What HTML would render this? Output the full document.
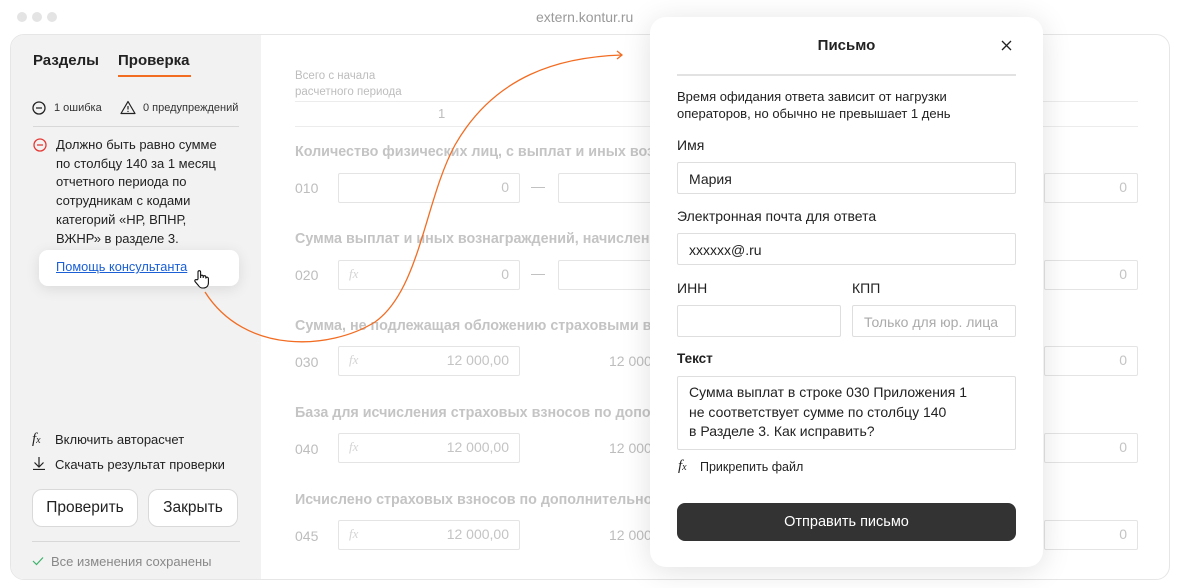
<!DOCTYPE html>
<html><head><meta charset="utf-8"><style>
*{box-sizing:border-box;margin:0;padding:0}
body{width:1180px;height:588px;background:#fff;font-family:"Liberation Sans","DejaVu Sans",sans-serif;position:relative;overflow:hidden;color:#222}
.a{position:absolute;white-space:nowrap}
.dot{position:absolute;width:10px;height:10px;border-radius:50%;background:#e4e4e4;top:12px}
.frame{position:absolute;left:10px;top:34px;width:1160px;height:546px;border:1px solid #e6e6e6;border-radius:14px;overflow:hidden;background:#fff}
.side{position:absolute;left:0;top:0;width:250px;height:100%;background:#f2f2f2}
.g{color:#bdbdbd}
.gt{color:#c4c4c4;font-weight:bold;font-size:14.3px}
.inp{position:absolute;border:1px solid #e4e4e4;border-radius:2px;height:30px;background:#fff}
.val{position:absolute;right:10px;top:5px;font-size:14px;color:#c4c4c4}
.fx{position:absolute;left:10px;top:5px;font-family:"Liberation Serif",serif;font-style:italic;font-size:13px;color:#d4d4d4}
.modal{position:absolute;left:650px;top:17px;width:393px;height:550px;background:#fff;border-radius:16px;box-shadow:0 4px 30px rgba(0,0,0,.12)}
.mi{position:absolute;border:1px solid #dedede;border-radius:2px;background:#fff;font-size:14px;padding:8px 11px;color:#222}
.lbl{position:absolute;font-size:14px;color:#222}
.btn{position:absolute;border:1px solid #d9d9d9;border-radius:10px;background:#fff;font-size:15.5px;text-align:center;line-height:36px;color:#222}
</style></head><body>
<div class="dot" style="left:17px"></div><div class="dot" style="left:32px"></div><div class="dot" style="left:47px"></div>
<div class="a" style="left:536px;top:9px;font-size:14px;color:#9a9a9a">extern.kontur.ru</div>

<div class="frame">
 <div class="side">
  <div class="a" style="left:22px;top:17px;font-size:15px;font-weight:bold;color:#222">Разделы</div>
  <div class="a" style="left:107px;top:17px;font-size:15px;font-weight:bold;color:#222">Проверка</div>
  <div class="a" style="left:107px;top:40px;width:73px;height:2px;background:#f26c22"></div>
  <svg class="a" style="left:21px;top:66px" width="14" height="14"><circle cx="7" cy="7" r="6" fill="none" stroke="#222" stroke-width="1.3"/><line x1="4" y1="7" x2="10" y2="7" stroke="#222" stroke-width="1.3"/></svg>
  <div class="a" style="left:43px;top:67px;font-size:11px;color:#333">1 ошибка</div>
  <svg class="a" style="left:109px;top:65px" width="16" height="15"><path d="M8 1.5 L15 13.5 H1 Z" fill="none" stroke="#222" stroke-width="1.2" stroke-linejoin="round"/><line x1="8" y1="6" x2="8" y2="9.5" stroke="#222" stroke-width="1.2"/><circle cx="8" cy="11.4" r=".7" fill="#222"/></svg>
  <div class="a" style="left:132px;top:67px;font-size:11px;color:#333">0 предупреждений</div>
  <div class="a" style="left:22px;top:91px;width:206px;height:1px;background:#d8d8d8"></div>
  <svg class="a" style="left:22px;top:103px" width="14" height="14"><circle cx="7" cy="7" r="6" fill="none" stroke="#e53935" stroke-width="1.3"/><line x1="4" y1="7" x2="10" y2="7" stroke="#e53935" stroke-width="1.3"/></svg>
  <div class="a" style="left:45px;top:101px;font-size:13px;line-height:18.7px;color:#222">Должно быть равно сумме<br>по столбцу 140 за 1 месяц<br>отчетного периода по<br>сотрудникам с кодами<br>категорий «НР, ВПНР,<br>ВЖНР» в разделе 3.</div>
  <div class="a" style="left:28px;top:215px;width:200px;height:36px;background:#fff;border-radius:9px;box-shadow:0 3px 14px rgba(0,0,0,.1)"></div>
  <div class="a" style="left:45px;top:224px;font-size:12.8px;color:#1a5fd6;text-decoration:underline">Помощь консультанта</div>
  <svg class="a" style="left:182px;top:234px" width="18" height="20"><path d="M5 10 V3 a1.3 1.3 0 0 1 2.6 0 V9 V7.5 a1.3 1.3 0 0 1 2.6 0 V9 V8 a1.3 1.3 0 0 1 2.6 0 V9.5 a1.3 1.3 0 0 1 2.6 0 V14 c0 3-2 5-5 5 h-1 c-2 0-3-1-4-2.5 L2 12.5 a1.3 1.3 0 0 1 2-1.6 Z" fill="#fff" stroke="#111" stroke-width="1.1"/></svg>
  <div class="a" style="left:21px;top:396px;font-family:'Liberation Serif',serif;font-style:italic;font-size:15px;color:#222">f<span style="font-size:10px">x</span></div>
  <div class="a" style="left:44px;top:397px;font-size:13px;color:#222">Включить авторасчет</div>
  <svg class="a" style="left:21px;top:421px" width="14" height="14"><path d="M7 1 V11 M2.5 6.5 L7 11 L11.5 6.5 M1 13.5 H13" fill="none" stroke="#222" stroke-width="1.2"/></svg>
  <div class="a" style="left:44px;top:422px;font-size:13px;color:#222">Скачать результат проверки</div>
  <div class="btn" style="left:21px;top:454px;width:106px;height:38px">Проверить</div>
  <div class="btn" style="left:137px;top:454px;width:90px;height:38px">Закрыть</div>
  <div class="a" style="left:21px;top:506px;width:208px;height:1px;background:#d8d8d8"></div>
  <svg class="a" style="left:21px;top:521px" width="12" height="10"><path d="M1 5 L4.5 8.5 L11 1.5" fill="none" stroke="#3bb26b" stroke-width="1.2"/></svg>
  <div class="a" style="left:40px;top:519px;font-size:13px;color:#888">Все изменения сохранены</div>
 </div>

 <div class="a g" style="left:284px;top:33px;font-size:11.5px;line-height:16px">Всего с начала<br>расчетного периода</div>
 <div class="a" style="left:284px;top:66px;width:843px;height:1px;background:#ececec"></div>
 <div class="a g" style="left:427px;top:71px;font-size:13px">1</div>
 <div class="a" style="left:284px;top:91px;width:843px;height:1px;background:#ececec"></div>

 <div class="a gt" style="left:284px;top:109px">Количество физических лиц, с выплат и иных возна</div>
 <div class="a g" style="left:284px;top:145px;font-size:14px">010</div>
 <div class="inp" style="left:327px;top:138px;width:182px"><span class="val">0</span></div>
 <div class="a g" style="left:520px;top:143px;font-size:14px">—</div>
 <div class="inp" style="left:547px;top:138px;width:120px"></div>
 <div class="inp" style="left:1033px;top:138px;width:94px"><span class="val">0</span></div>

 <div class="a gt" style="left:284px;top:196px">Сумма выплат и иных вознаграждений, начисленных</div>
 <div class="a g" style="left:284px;top:232px;font-size:14px">020</div>
 <div class="inp" style="left:327px;top:225px;width:182px"><span class="fx">fx</span><span class="val">0</span></div>
 <div class="a g" style="left:520px;top:230px;font-size:14px">—</div>
 <div class="inp" style="left:547px;top:225px;width:120px"></div>
 <div class="inp" style="left:1033px;top:225px;width:94px"><span class="val">0</span></div>

 <div class="a gt" style="left:284px;top:283px">Сумма, не подлежащая обложению страховыми взно</div>
 <div class="a g" style="left:284px;top:319px;font-size:14px">030</div>
 <div class="inp" style="left:327px;top:311px;width:182px"><span class="fx">fx</span><span class="val">12 000,00</span></div>
 <div class="a g" style="left:598px;top:318px;font-size:14px">12 000,</div>
 <div class="inp" style="left:1033px;top:311px;width:94px"><span class="val">0</span></div>

 <div class="a gt" style="left:284px;top:370px">База для исчисления страховых взносов по дополнит</div>
 <div class="a g" style="left:284px;top:406px;font-size:14px">040</div>
 <div class="inp" style="left:327px;top:398px;width:182px"><span class="fx">fx</span><span class="val">12 000,00</span></div>
 <div class="a g" style="left:598px;top:405px;font-size:14px">12 000,</div>
 <div class="inp" style="left:1033px;top:398px;width:94px"><span class="val">0</span></div>

 <div class="a gt" style="left:284px;top:457px">Исчислено страховых взносов по дополнительному т</div>
 <div class="a g" style="left:284px;top:493px;font-size:14px">045</div>
 <div class="inp" style="left:327px;top:485px;width:182px"><span class="fx">fx</span><span class="val">12 000,00</span></div>
 <div class="a g" style="left:598px;top:492px;font-size:14px">12 000,</div>
 <div class="inp" style="left:1033px;top:485px;width:94px"><span class="val">0</span></div>
</div>

<svg class="a" style="left:0;top:0" width="1180" height="588"><path d="M205 292 C245 355 330 350 375 322 C420 290 425 200 455 145 C495 75 560 57 622 55" fill="none" stroke="#f26c22" stroke-width="1.3"/><path d="M617 51 L622 55 L617 59" fill="none" stroke="#f26c22" stroke-width="1.3"/></svg>

<div class="modal">
 <div class="a" style="left:0;width:393px;text-align:center;top:20px;font-size:15px;font-weight:bold;color:#222">Письмо</div>
 <svg class="a" style="left:351px;top:23px" width="11" height="11"><path d="M1 1 L10 10 M10 1 L1 10" stroke="#222" stroke-width="1.3"/></svg>
 <div class="a" style="left:27px;top:57px;width:339px;height:2px;background:#e2e2e2"></div>
 <div class="a" style="left:27px;top:72px;font-size:13px;line-height:16.5px;color:#222">Время офидания ответа зависит от нагрузки<br>операторов, но обычно не превышает 1 день</div>
 <div class="lbl" style="left:27px;top:120px">Имя</div>
 <div class="mi" style="left:27px;top:145px;width:339px;height:32px">Мария</div>
 <div class="lbl" style="left:27px;top:191px">Электронная почта для ответа</div>
 <div class="mi" style="left:27px;top:216px;width:339px;height:32px">xxxxxx@.ru</div>
 <div class="lbl" style="left:27px;top:263px">ИНН</div>
 <div class="lbl" style="left:202px;top:263px">КПП</div>
 <div class="mi" style="left:27px;top:288px;width:164px;height:32px"></div>
 <div class="mi" style="left:202px;top:288px;width:164px;height:32px;color:#aaa">Только для юр. лица</div>
 <div class="lbl" style="left:27px;top:334px;font-weight:bold;font-size:13.5px">Текст</div>
 <div class="mi" style="left:27px;top:359px;width:339px;height:74px;line-height:19.5px;padding:6px 11px">Сумма выплат в строке 030 Приложения 1<br>не соответствует сумме по столбцу 140<br>в Разделе 3. Как исправить?</div>
 <div class="a" style="left:28px;top:441px;font-family:'Liberation Serif',serif;font-style:italic;font-size:15px;color:#222">f<span style="font-size:10px">x</span></div>
 <div class="a" style="left:50px;top:443px;font-size:12.5px;color:#222">Прикрепить файл</div>
 <div class="a" style="left:27px;top:486px;width:339px;height:38px;background:#333;border-radius:8px;color:#fff;font-size:14.5px;text-align:center;line-height:38px">Отправить письмо</div>
</div>
</body></html>
